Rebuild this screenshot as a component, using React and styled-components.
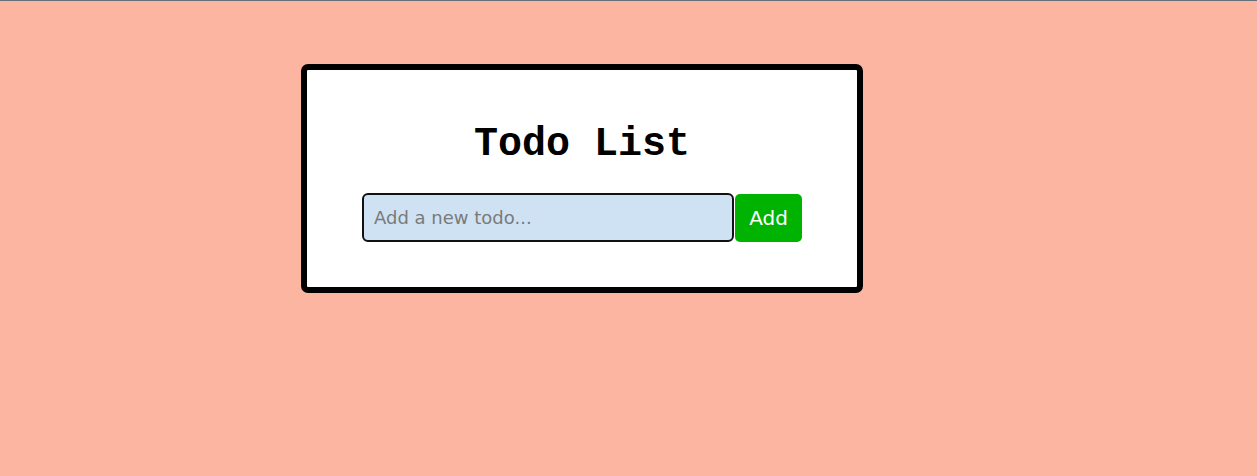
import React, { useState } from "react";
import styled, { createGlobalStyle } from "styled-components";

const GlobalStyle = createGlobalStyle`
  html, body {
    margin: 0;
    padding: 0;
  }
  body {
    background: #fbb5a1;
    border-top: 1px solid #65707a;
    min-height: 475px;
    font-family: "Comic Sans MS", "DejaVu Sans", sans-serif;
  }
`;

const Page = styled.main`
  display: flex;
  justify-content: flex-start;
  padding: 63px 0 0 301px;
`;

const Card = styled.section`
  width: 550px;
  height: 217px;
  background: #fff;
  border: 6px solid #000;
  border-radius: 7px;
  display: flex;
  flex-direction: column;
  align-items: center;
`;

const Title = styled.h1`
  margin: 52px 0 0;
  font-family: "Liberation Mono", "Courier New", monospace;
  font-weight: 700;
  font-size: 40px;
  line-height: 46px;
`;

const Form = styled.form`
  display: flex;
  margin-top: 25px;
`;

const Input = styled.input`
  box-sizing: border-box;
  width: 372px;
  height: 49px;
  padding: 0 10px;
  border: 2px solid #111;
  border-radius: 6px;
  background: #cfe2f3;
  font-family: "Comic Sans MS", "DejaVu Sans", sans-serif;
  font-size: 18px;
  color: #222;
  outline: none;
  &::placeholder {
    color: #7a7a7a;
  }
`;

const Button = styled.button`
  width: 67px;
  height: 48px;
  margin: 1px 0 0 1px;
  border: none;
  border-radius: 5px;
  background: #00b300;
  color: #fff;
  font-family: "Comic Sans MS", "DejaVu Sans", sans-serif;
  font-size: 20px;
  cursor: pointer;
`;

const App = () => {
  const [text, setText] = useState("");
  return (
    <>
      <GlobalStyle />
      <Page>
        <Card>
          <Title>Todo List</Title>
          <Form onSubmit={(e) => e.preventDefault()}>
            <Input
              autoFocus
              value={text}
              onChange={(e) => setText(e.target.value)}
              placeholder="Add a new todo..."
            />
            <Button type="submit">Add</Button>
          </Form>
        </Card>
      </Page>
    </>
  );
};

export default App;
